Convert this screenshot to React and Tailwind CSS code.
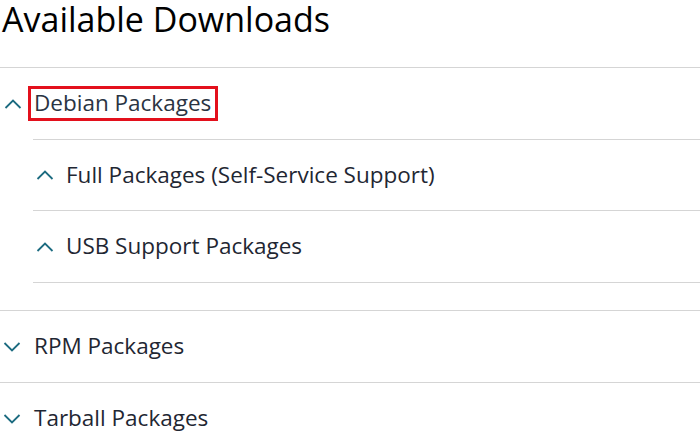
import React from "react";

const Chevron = ({ up, className = "" }) => (
  <svg width="18" height="10" viewBox="0 0 18 10" className={className} fill="none">
    {up ? (
      <path d="M1.5 9L9 1.5L16.5 9" stroke="#1c6b80" strokeWidth="1.8" />
    ) : (
      <path d="M1.5 1L9 8.5L16.5 1" stroke="#1c6b80" strokeWidth="1.8" />
    )}
  </svg>
);

const Line = ({ inset }) => (
  <div className={`h-px bg-[#d5d5d5] ${inset ? "ml-[33px]" : ""}`} />
);

export default function App() {
  return (
    <div
      className="w-[700px] h-[436px] overflow-hidden bg-white text-[#1f2733]"
      style={{ fontFamily: '"Open Sans", sans-serif' }}
    >
      <div className="h-[67px] pl-[2px] pt-0">
        <h1 className="text-[34px] leading-[38px] text-black whitespace-nowrap">Available Downloads</h1>
      </div>
      <Line />
      {/* Debian */}
      <div className="h-[71px] flex items-center pl-[4px]">
        <Chevron up />
        <div className="ml-[6px] border-[3px] border-[#e3101c] pl-[3px] pr-[4px] h-[35px] flex items-center">
          <span className="text-[22.5px] leading-none text-[#2a3443]">Debian Packages</span>
        </div>
      </div>
      <Line inset />
      <div className="h-[70px] flex items-center pl-[36px]">
        <Chevron up />
        <span className="ml-[12px] text-[22.5px] leading-none">Full Packages (Self-Service Support)</span>
      </div>
      <Line inset />
      <div className="h-[71px] flex items-center pl-[36px]">
        <Chevron up />
        <span className="ml-[12px] text-[22.5px] leading-none">USB Support Packages</span>
      </div>
      <Line inset />
      <div className="h-[27px]" />
      <Line />
      <div className="h-[71px] flex items-center pl-[3px]">
        <Chevron />
        <span className="ml-[13px] text-[22.5px] leading-none">RPM Packages</span>
      </div>
      <Line />
      <div className="h-[71px] flex items-center pl-[3px]">
        <Chevron />
        <span className="ml-[13px] text-[22.5px] leading-none">Tarball Packages</span>
      </div>
    </div>
  );
}
